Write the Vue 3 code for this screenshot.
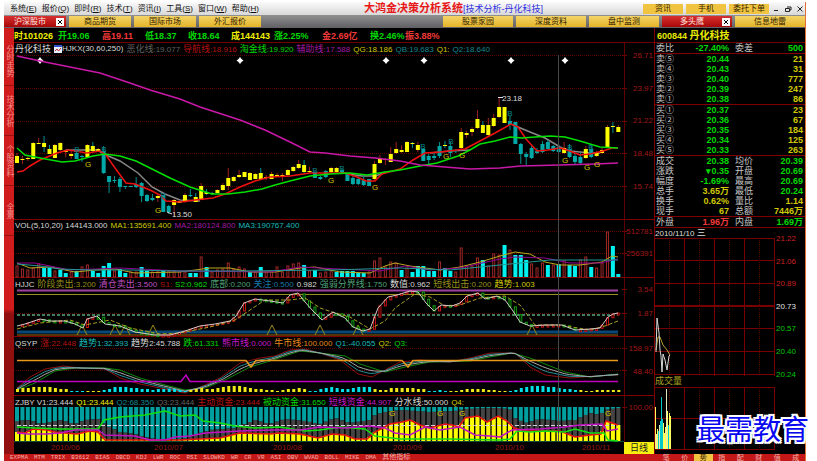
<script setup>
const menus = ['系统(E)', '报价(Q)', '即时(R)', '技术(T)', '资讯(I)', '工具(S)', '窗口(W)', '帮助(H)'].map((m) => ({
  name: m.slice(0, 3), key: m[3], id: m
}))
const leftTabs = [{ t: '沪深股市', on: true }, { t: '商品期货' }, { t: '国际市场' }, { t: '外汇报价' }]
const rightTabs = [{ t: '股票家园' }, { t: '深度资料' }, { t: '盘中监测' }, { t: '多头鹰', on: true }, { t: '信息地雷' }]
const rail = ['分时走势', '技术分析', '个股资料', '全景']

const quote = [
  ['时', '101026', 'y'], ['开', '19.06', 'g'], ['高', '19.11', 'r'], ['低', '18.37', 'g'], ['收', '18.64', 'g'],
  ['成', '144143', 'y'], ['涨', '2.25%', 'g'], ['金', '2.69亿', 'r'], ['换', '2.46%', 'g'], ['振', '3.88%', 'r']
]

const headMain = [
  ['恶化线', ':19.077', 'dim'], ['导航线', ':18.916', 'dr'], ['淘金线', ':19.920', 'g'], ['辅助线', ':17.588', 'm'],
  ['', 'QG:18.186', 'dy'], ['', 'QB:19.683', 't'], ['', 'Q1:', 'dy'], ['', 'Q2:18.640', 't']
]
const headVol = [
  ['', 'VOL(5,10,20) 144143.000', 'w'], ['', 'MA1:135691.400', 'dy'], ['', 'MA2:180124.800', 'm'], ['', 'MA3:190767.400', 'c']
]
const headHjjc = [
  ['', 'HJJC', 'w'], ['阶段卖出', ':3.200', 'o'], ['清仓卖出', ':3.500', 'v'], ['', 'S1:', 'dr'], ['', 'S2:0.962', 'g'],
  ['底部', ':0.200', 's'], ['关注', ':0.500', 'b'], ['', '0.982', 'w'], ['强弱分界线', ':1.750', 's'], ['数值', ':0.962', 'w'],
  ['短线出击', ':0.200', 'o'], ['趋势', ':1.003', 'dy']
]
const headQsyp = [
  ['', 'QSYP', 'w'], ['涨', ':22.448', 'dr'], ['趋势', '1:32.393', 'c'], ['趋势', '2:45.788', 'w'], ['跌', ':61.331', 'g'],
  ['熊市线', ':0.000', 'p'], ['牛市线', ':100.000', 'a'], ['', 'Q1:-40.055', 'c'], ['', 'Q2:', 'dy'], ['', 'Q3:', 'g']
]
const headZjby = [
  ['', 'ZJBY V1:23.444', 'w'], ['', 'Q1:23.444', 'y'], ['', 'Q2:68.350', 't'], ['', 'Q3:23.444', 'dim'],
  ['主动资金', ':23.444', 'dr'], ['被动资金', ':31.650', 'g'], ['短线资金', ':44.907', 'p'], ['分水线', ':50.000', 'w'], ['', 'Q4:', 'dy']
]

/* Sessions are spread evenly between the first and the last x of the plot */
const px = (i) => 17 + (i * 601.3) / 111
const idx = Array.from({ length: 112 }, (_, i) => i)

/* kind, body top, body bottom, wick top, wick bottom */
const candles = `Y156,163,153,163 Y159,160,156,164 Y158,159,155,161 Y143,159,142,159 Y143,144,138,144 M143,147,136,152 M149,154,145,154 Y145,158,144,158 Y143,150,142,151 Y150,152,149,157
Y154,156,150,159 C153,159,150,159 C156,157,155,162 Y145,157,144,157 M146,151,142,152 Y149,151,148,151 C151,173,146,174 C176,182,176,193 C180,181,176,183 C179,187,177,192
C186,187,186,189 C186,187,186,187 C184,187,177,188 C183,196,182,202 C195,201,194,202 C198,200,194,201 Y196,198,194,202 C195,212,195,212 C206,212,205,214 Y200,205,199,217
Y201,203,200,203 Y195,202,193,203 C195,196,189,197 M197,202,193,202 Y186,200,183,200 M192,194,189,195 M193,194,192,195 Y190,193,189,193 Y185,190,183,191 Y178,186,168,190
Y177,181,176,182 Y175,177,170,178 Y172,177,172,177 Y173,180,172,180 Y174,179,173,179 M173,179,168,180 Y177,178,175,180 Y174,179,172,179 Y175,176,173,177 Y175,176,173,181
Y170,175,169,176 Y167,171,166,172 Y164,168,160,169 M165,172,160,173 Y171,172,167,173 C172,178,171,178 C177,179,176,180 C171,177,170,178 Y168,172,167,173 Y168,172,167,173
C170,173,169,173 C174,181,173,181 C178,184,175,185 C179,184,176,185 C180,185,176,186 C179,186,179,186 Y164,179,161,180 Y158,163,155,164 Y159,160,158,165 Y154,162,147,162
Y149,153,142,154 Y150,152,145,153 Y142,152,141,152 M143,144,142,148 Y145,150,142,152 C149,161,148,161 C156,160,154,164 C156,158,153,160 C146,156,142,158 M145,146,141,148
C146,153,142,157 C150,151,149,153 Y132,148,128,149 Y133,135,131,138 Y129,132,127,136 Y119,128,110,129 M125,133,121,133 Y125,135,118,136 Y118,126,114,127 Y107,117,98,118
Y107,123,107,123 C121,125,116,130 C122,144,122,144 C144,154,143,164 C154,157,152,165 C148,158,146,159 C151,153,148,154 C144,152,141,153 C142,149,140,149 C146,151,145,152
C147,152,144,153 Y148,153,142,154 C149,157,144,158 C156,162,153,164 C157,163,153,164 Y149,158,146,159 C149,157,144,158 Y152,156,151,157 Y150,153,148,154 Y127,147,125,148
M126,127,122,133 Y127,132,125,132`.split(/\s+/).map((s, i) => {
  const [t, b, wt, wb] = s.slice(1).split(',').map(Number)
  return { x: px(i), t, h: Math.max(b - t, 1), wt, wb, body: s[0] === 'C' ? '#00a8a8' : '#ffff00', wick: s[0] === 'Y' ? '#a02020' : '#009090' }
})

/* Bar heights; a negative value marks a falling session, drawn solid */
const volumes = [11, 8, 7, 9, 13, -9, -9, 6, -7, -4, 5, -6, 10, 12, -6, -4, -11, -14, 6, -8, -4, 5, 5, -10, -6, 5, 6, -6,
  6, 6, 5, 5, -4, -4, 20, -10, 5, 7, 8, 14, 8, 10, 8, -5, 5, -10, 5, 6, 10, 5, 11, 13, 14, -12, 6, -7,
  4, 5, 6, -5, -6, -6, -6, -4, -4, 5, 16, 19, 10, 15, 14, -7, 9, -5, -11, -11, -6, -6, 15, -9, -6, 5, 29, 11,
  11, 19, -17, 11, 23, 22, -32, 27, -22, -22, -17, 13, 9, 14, -12, 12, -13, 16, -12, -11, 17, 20, -10, 9, 14, 45, -31, -3]

const maRed = '17,172 23,171 30,166 40,160 57,153 68,150 75,151 87,153 100,151 106,155 115,168 126,183 135,184 150,190 160,195 166,201 180,202 195,200 213,198 225,194 240,187 255,181 270,177 290,176 310,173 345,173 357,177 366,181 375,181 382,174 400,169 413,160 425,153 440,152 465,149 480,141 495,133 511,124 518,127 526,139 537,151 548,150 560,148 567,150 580,155 590,154 603,151 612,148 618,148'
const maGrey = ['66,150 97,150 106,155 120,161 138,173 152,187 165,194 180,200 200,201', '345,173 355,175 362,176 376,176 385,172', '430,153 450,151 470,150', '511,124 518,127 530,132 545,138 560,147 570,151 590,153 600,153']
const maGreen = '17,148 25,155 40,158 62,162 75,161 93,156 105,154 120,156 136,161 150,168 170,178 190,187 212,194 228,194 245,192 262,189 275,185 290,181 310,176 330,174 350,173 367,175 385,172 400,170 420,166 437,163 458,156 470,150 480,144 495,141 510,137 522,138 535,137 550,136 565,137 580,141 600,147 618,148'
const maPink = '17,56 40,61 70,67 100,73 130,83 150,90 180,99 200,107 240,120 265,130 290,142 310,152 325,153 350,156 375,158 400,161 420,165 445,167 470,169 500,168 520,166 560,165 595,164 618,163'
const gMarks = [[88, 164], [158, 210], [331, 180], [375, 187], [446, 156], [462, 155], [565, 160], [587, 167], [597, 164]]
const bMarks = [[77, 149], [104, 149], [163, 195], [315, 170], [342, 168], [423, 146], [451, 141], [510, 113], [570, 147], [591, 147]]
const diamonds = [40, 240, 386, 424, 511, 565]

const hjWhite = '17,326 25,324 40,319 50,321 65,321 75,324 83,328 87,319 97,316 105,324 120,326 135,332 155,335 170,335 185,331 200,326 215,324 230,321 236,316 244,303 255,299 270,301 283,303 290,295 298,293 305,302 313,311 322,320 333,312 345,318 353,327 363,331 370,329 378,308 388,297 397,295 410,291 418,292 426,303 434,311 441,305 452,306 460,303 467,296 478,293 485,299 497,296 505,300 513,311 520,322 530,326 545,325 562,325 575,330 590,329 600,328 608,317 613,314 618,313'
const hjYellow = '17,329 40,323 70,320 85,325 110,320 130,328 160,334 180,333 210,327 235,320 250,310 265,300 290,300 305,298 320,308 335,313 350,317 370,329 385,321 395,308 415,294 430,297 445,306 460,305 480,298 505,296 520,305 535,325 560,325 590,330 605,326 618,321'
const peaks = [82, 115, 125, 153, 272, 320, 358, 532]

const parse = (s) => s.split(' ').map((p) => p.split(',').map(Number))
const sampler = (s) => {
  const pts = parse(s)
  return (x) => {
    const k = pts.findIndex((p) => p[0] >= x)
    if (k < 0) return pts[pts.length - 1][1]
    if (k === 0) return pts[0][1]
    const [x0, y0] = pts[k - 1]
    const [x1, y1] = pts[k]
    return y0 + ((y1 - y0) * (x - x0)) / (x1 - x0)
  }
}
const hjAt = sampler(hjWhite)
const hjBars = idx.slice(1).map((i) => {
  const a = hjAt(px(i - 1))
  const b = hjAt(px(i))
  return { x: px(i) - 1, y: Math.min(a, b), h: Math.max(Math.abs(b - a), 2), c: b <= a ? '#c81414' : '#10a010' }
})

const qsRed = '17,388 30,377 45,369 63,366 80,368 105,369 120,378 140,384 160,388 185,393 205,385 220,378 240,363 260,358 275,356 290,350 305,349 320,353 340,360 358,374 372,377 385,370 400,362 420,360 450,362 470,358 490,353 515,353 530,367 545,375 570,378 595,376 618,375'
const qsGreen = '17,390 35,383 55,371 75,368 105,368 120,370 140,378 165,385 185,390 205,388 225,380 250,367 270,361 300,351 320,353 345,356 360,364 385,372 405,367 430,362 470,361 490,357 512,353 530,358 545,364 565,372 590,377 618,374'
const rAt = sampler(qsRed)
const gAt = sampler(qsGreen)
const blend = (k) => idx.map((i) => `${px(i).toFixed(1)},${(rAt(px(i)) * (1 - k) + gAt(px(i)) * k).toFixed(1)}`).join(' ')
const qsCyan = blend(0.33)
const qsWhite = blend(0.66)
const qsBars = [3, 4, 4, 5, 5, 5, 5, 4, 3, 3, -1, -1, -1, 1, 1, 1, -2, -3, -5, -5, -5, -4, -4, -3, -3, -2, -3, -3,
  -3, -3, -2, -1, 2, 3, 4, 3, 3, 4, 5, 6, 6, 6, 5, 4, 3, 3, 2, 2, 1, 2, 3, 3, 4, 3, -1, -1,
  -3, -4, -5, -4, -3, -3, -4, -5, -5, -5, 3, 2, 2, 4, 4, 4, 4, 4, 3, 3, -1, -1, -2, -1, 1, 1, 2, 3,
  3, 3, 3, 2, 2, 1, 1, -1, -2, -4, -5, -6, -6, -6, -5, -5, -4, -3, -3, -2, 2, 1, 1, 2, 2, 2, 2, 2]

const zRed = '17,432 25,433 33,429 47,430 55,432 65,433 77,434 90,431 98,432 105,440 140,440 180,440 220,438 240,433 270,434 280,433 300,434 318,438 332,434 345,435 355,439 367,439 375,432 390,424 402,422 410,420 420,425 430,428 445,424 452,425 459,427 465,418 478,416 487,422 498,416 507,421 514,428 525,431 545,431 560,431 575,437 590,435 601,434 606,421 618,425'
const zTeal = '17,421 30,420 40,424 60,420 75,424 85,420 100,419 105,425 120,432 135,434 145,437 165,441 185,438 210,430 235,428 255,420 270,424 285,419 305,421 320,424 335,418 350,423 370,420 375,415 385,412 400,410 430,412 455,411 465,409 500,408 512,410 515,418 525,423 540,419 560,421 575,420 590,413 600,415 605,410 618,408'
const zGreen = '17,427 35,428 60,429 98,429 104,420 120,417 145,415 165,411 180,416 195,415 203,421 220,423 235,426 255,428 280,427 305,431 320,430 340,427 365,429 375,436 400,439 450,439 500,440 510,439 517,431 530,432 545,431 565,432 575,429 590,433 604,433 608,440 618,441'
const zPink = '17,433 28,434 45,434 60,433 75,430 98,430 105,435 135,436 150,440 165,440 175,437 190,436 205,433 240,431 275,430 300,430 320,427 345,428 370,426 385,428 395,433 410,435 425,427 440,430 460,427 475,435 490,436 500,437 512,430 540,429 565,427 580,425 602,424 607,431 618,429'
const yAt = sampler(zRed)
const tAt = sampler(zTeal)
const zBars = idx.map((i) => ({ x: px(i) - 2, t: tAt(px(i)), y: Math.max(yAt(px(i)), tAt(px(i))) }))
const dates = [['2010/06', 51], ['2010/07', 154], ['2010/08', 273], ['2010/09', 393], ['2010/10', 495], ['2010/11', 582]]

const asks = [['卖⑤', '20.44', '21'], ['卖④', '20.43', '31'], ['卖③', '20.40', '777'], ['卖②', '20.39', '247'], ['卖①', '20.38', '86']]
const bids = [['买①', '20.37', '23'], ['买②', '20.36', '67'], ['买③', '20.35', '184'], ['买④', '20.34', '125'], ['买⑤', '20.33', '263']]
const stats = [
  ['成交', '20.38', 'g', '均价', '20.39', 'g'], ['涨跌', '▾0.35', 'g', '开盘', '20.69', 'g'], ['幅度', '-1.69%', 'g', '最高', '20.69', 'g'],
  ['总手', '3.65万', 'dy', '最低', '20.24', 'g'], ['换手', '0.62%', 'dy', '量比', '1.14', 'dy'], ['现手', '67', 'dy', '总额', '7446万', 'dy']
]
const levels = [['21.22', 240, '#c82020'], ['21.06', 263, '#c82020'], ['20.89', 285, '#c82020'], ['20.73', 308, '#e0e0e0'], ['20.57', 330, '#00c800'], ['20.40', 353, '#00c800'], ['20.24', 376, '#00c800']]
const ticks = [42, 15, 20, 18, 24, 28, 52, 30, 26, 16, 22, 60, 38, 24, 36, 33].map((h, i) => ({
  x: 655 + i, h, c: ['#ffff60', '#e8e8c0', '#00c8c8'][[0, 1, 0, 2, 1, 2, 2, 2, 0, 0, 0, 1, 0, 2, 0, 0][i]]
}))
const indicators = ['EXPMA', 'MTM', 'TRIX', 'B3612', 'BIAS', 'DBCD', 'KDJ', 'LWR', 'ROC', 'RSI', 'SLOWKD', 'WR', 'CR', 'VR', 'ASI', 'OBV', 'WVAD', 'BOLL', 'MIKE', 'DMA', '其他指标']
const sideTabs = ['笔', '价', '势', '指', '配', '财', '值', '成']
</script>

<template>
  <div class="page">
    <div class="app">
      <header class="title-bar">
        <nav class="menus">
          <button v-for="m in menus" :key="m.id" class="menu">{{ m.name }}<u>{{ m.key }}</u>)</button>
        </nav>
        <h1 class="title">大鸿金决策分析系统<span>[技术分析-丹化科技]</span></h1>
        <div class="title-actions">
          <button class="gold">资讯</button>
          <button class="gold">手机</button>
          <button class="gold">委托下单</button>
          <button class="win" aria-label="最小化"><svg viewBox="0 0 8 8"><path d="M2 5.500h4" /></svg></button>
          <button class="win" aria-label="还原"><svg viewBox="0 0 8 8"><path d="M3 2h4v3h-1M1.500 3.500h4v3h-4z" /></svg></button>
          <button class="win" aria-label="关闭"><svg viewBox="0 0 8 8"><path d="M1.500 1.500l5 5M6.500 1.500l-5 5" /></svg></button>
        </div>
      </header>

      <div class="tab-bar">
        <div class="tabs left">
          <button v-for="t in leftTabs" :key="t.t" class="tab" :class="{ on: t.on }">
            <span>{{ t.t }}</span>
            <svg v-if="t.on" class="close" viewBox="0 0 8 8"><path d="M2 2l4 4M6 2l-4 4" /></svg>
          </button>
        </div>
        <div class="tabs right">
          <button v-for="t in rightTabs" :key="t.t" class="tab" :class="{ on: t.on }">
            <span>{{ t.t }}</span>
            <svg v-if="t.on" class="close" viewBox="0 0 8 8"><path d="M2 2l4 4M6 2l-4 4" /></svg>
          </button>
        </div>
      </div>

      <main class="body">
        <aside class="rail">
          <button v-for="r in rail" :key="r">{{ r }}</button>
        </aside>

        <section class="charts">
          <div class="quote">
            <span v-for="q in quote" :key="q[0]" :class="q[2]">{{ q[0] }}{{ q[1] }}</span>
          </div>

          <div class="panels">
            <div class="head">
              <span class="w"><b>丹化科技</b></span>
              <span class="w with-icon">
                <svg class="mark" viewBox="0 0 8 8"><rect width="8" height="8" fill="#e8ecff" /><path d="M0 1h8" stroke="#3050c8" stroke-width="2" /><path d="M1 6l2-2 1.500 2L7 3" stroke="#c03030" fill="none" /></svg>HJKX(30,60,250)
              </span>
              <span v-for="h in headMain" :key="h[0] + h[1]" :class="h[2]"><b>{{ h[0] }}</b>{{ h[1] }}</span>
            </div>
            <svg class="plot" viewBox="14 55 640 164">
              <path class="grid" d="M14 55.500H625M14 88.500H625M14 121.500H625M14 153.500H625M14 186.500H625" />
              <path class="tick" d="M622 55.500h5M622 88.500h5M622 121.500h5M622 153.500h5M622 186.500h5" />
              <g class="axis">
                <text x="653" y="58">26.71</text><text x="653" y="91">23.97</text><text x="653" y="123">21.22</text>
                <text x="653" y="156">18.48</text><text x="653" y="189">15.74</text>
              </g>
              <path v-for="d in diamonds" :key="d" :d="`M${d} 57l1.500 2 2 1.500-2 1.500-1.500 2-1.500-2-2-1.500 2-1.500z`" fill="#fff" />
              <polyline v-for="g in maGrey" :key="g" :points="g" stroke="#888" class="line" />
              <g v-for="(c, i) in candles" :key="i">
                <path :d="`M${c.x} ${c.wt}V${c.wb}`" :stroke="c.wick" />
                <rect :x="c.x - 2" :y="c.t" width="4" :height="c.h" :fill="c.body" />
              </g>
              <polyline :points="maRed" stroke="#f01010" class="line" />
              <polyline :points="maGreen" stroke="#00e000" class="line" />
              <polyline :points="maPink" stroke="#c818a8" class="line" />
              <g class="marks">
                <text v-for="m in gMarks" :key="m[0]" :x="m[0]" :y="m[1] + 3" fill="#d8c800">G</text>
                <text v-for="m in bMarks" :key="m[0]" :x="m[0]" :y="m[1] + 3" fill="#008890">B</text>
              </g>
              <g class="price">
                <path d="M498 97.500h5M167 212l5 2" stroke="#ddd" />
                <text x="502" y="101">23.18</text><text x="172" y="217">13.50</text>
              </g>
            </svg>

            <div class="head ruled">
              <span v-for="h in headVol" :key="h[1]" :class="h[2]">{{ h[1] }}</span>
            </div>
            <svg class="plot" viewBox="14 231 640 46">
              <path class="grid" d="M14 231.500H625M14 253.500H625" />
              <path class="tick" d="M622 231.500h5M622 253.500h5" />
              <g class="axis"><text x="653" y="234">512781</text><text x="653" y="256">256391</text></g>
              <g v-for="(v, i) in volumes" :key="i">
                <rect v-if="v < 0" :x="px(i) - 2" :y="277 + v" width="4" :height="-v" fill="#00f0f0" />
                <rect v-else :x="px(i) - 1" :y="277 - v" width="2" :height="v" fill="none" stroke="#a02828" />
              </g>
              <polyline class="thin" stroke="#b8a820" points="17,263 30,268 50,267 75,272 95,270 115,269 135,273 180,272 210,268 230,268 250,272 275,272 300,268 315,267 340,272 370,273 385,266 395,263 410,266 440,270 460,267 480,262 500,256 515,252 530,254 545,262 560,265 580,265 602,262 612,256 618,257" />
              <polyline class="thin" stroke="#900090" points="17,263 35,263 70,270 120,268 180,271 270,272 300,267 380,271 405,266 430,270 460,268 500,259 515,257 545,258 570,263 600,263 618,259" />
              <polyline class="thin" stroke="#209898" points="17,264 40,266 60,269 90,270 130,270 180,271 240,271 330,270 400,268 450,270 480,267 520,263 550,260 600,260 618,260" />
            </svg>

            <div class="head ruled">
              <span v-for="h in headHjjc" :key="h[0] + h[1]" :class="h[2]"><b>{{ h[0] }}</b>{{ h[1] }}</span>
            </div>
            <svg class="plot" viewBox="14 289 640 47">
              <path class="grid" d="M14 313.500H625" />
              <path class="tick" d="M622 289.500h5M622 313.500h5" />
              <g class="axis"><text x="653" y="292">3.54</text><text x="653" y="316">1.87</text></g>
              <path d="M17 290.500H618" stroke="#a040a0" stroke-width="2" />
              <path d="M17 294.500H618" stroke="#989020" />
              <path d="M17 315H618" stroke="#408060" stroke-width="2" stroke-dasharray="3 2" />
              <path d="M17 332H618" stroke="#084878" stroke-width="3" />
              <path d="M17 335H618" stroke="#a86808" stroke-width="1" />
              <path v-for="p in peaks" :key="p" :d="`M${p - 5} 335l5-10 5 10`" stroke="#988818" fill="none" />
              <rect v-for="(b, i) in hjBars" :key="i" :x="b.x" :y="b.y" width="2" :height="b.h" fill="#000" :stroke="b.c" />
              <polyline :points="hjYellow" class="thin" stroke="#a8a020" stroke-dasharray="4 2" />
              <polyline :points="hjWhite" class="thin" stroke="#d0c8c8" />
            </svg>

            <div class="head ruled">
              <span v-for="h in headQsyp" :key="h[0] + h[1]" :class="h[2]"><b>{{ h[0] }}</b>{{ h[1] }}</span>
            </div>
            <svg class="plot" viewBox="14 348 640 47">
              <path class="grid" d="M14 348.500H625M14 370.500H625" />
              <path class="tick" d="M622 348.500h5M622 370.500h5" />
              <g class="axis"><text x="653" y="351">158.97</text><text x="653" y="374">48.40</text></g>
              <polyline :points="qsRed" class="thin" stroke="#901010" />
              <polyline :points="qsGreen" class="thin" stroke="#108810" />
              <polyline :points="qsCyan" class="thin" stroke="#289098" />
              <polyline :points="qsWhite" class="thin" stroke="#a8a8a8" />
              <polyline points="17,360.500 246,360.500 251,367 256,360.500 402,360.500 408,367 413,360.500 618,360.500" stroke="#e89818" class="line" />
              <polyline points="17,381.500 181,381.500 186,375 190,381.500 618,381.500" stroke="#c000c0" class="line" />
              <rect v-for="(v, i) in qsBars" :key="i" :x="px(i) - 1" :y="392 - Math.abs(v)" width="3" :height="Math.abs(v)" :fill="v < 0 ? '#00e0e8' : '#f0e818'" />
            </svg>

            <div class="head ruled">
              <span v-for="h in headZjby" :key="h[0] + h[1]" :class="h[2]"><b>{{ h[0] }}</b>{{ h[1] }}</span>
            </div>
            <svg class="plot" viewBox="14 407 640 35">
              <path class="tick" d="M622 407.500h5" />
              <g class="axis"><text x="653" y="410">100.00</text></g>
              <g v-for="(b, i) in zBars" :key="i">
                <rect :x="b.x" y="407" width="4" :height="b.t - 407" fill="#00a0a0" />
                <rect :x="b.x" :y="b.t" width="4" :height="442 - b.t" fill="#444" />
                <rect :x="b.x" :y="b.y" width="4" :height="442 - b.y" fill="#ffff00" />
              </g>
              <path d="M17 425.500H618" stroke="#d8d0d8" stroke-dasharray="4 2" />
              <path d="M14 441.500H625" stroke="#105030" />
              <polyline :points="zRed" class="line" stroke="#e81010" />
              <polyline :points="zGreen" class="line" stroke="#10e010" />
              <polyline :points="zPink" class="line" stroke="#c010c0" />
              <g class="marks" fill="#d8c800">
                <text x="392" y="416">G</text><text x="440" y="416">G</text><text x="462" y="416">G</text><text x="608" y="416">G</text>
              </g>
            </svg>
            <span class="axis-line"></span>
            <span class="crosshair"></span>
          </div>

          <div class="dates">
            <svg viewBox="14 442 610 12">
              <g fill="#981818"><text v-for="d in dates" :key="d[0]" :x="d[1]" y="450">{{ d[0] }}</text></g>
            </svg>
            <button class="period">日线</button>
          </div>
        </section>

        <aside class="side">
          <h2>600844 <span>丹化科技</span></h2>
          <table>
            <tbody>
              <tr><th>委比</th><td class="g">-27.40%</td><th>委差</th><td class="g">500</td></tr>
            </tbody>
            <tbody>
              <tr v-for="a in asks" :key="a[0]"><th>{{ a[0] }}</th><td class="g">{{ a[1] }}</td><th></th><td class="dy">{{ a[2] }}</td></tr>
            </tbody>
            <tbody>
              <tr v-for="a in bids" :key="a[0]"><th>{{ a[0] }}</th><td class="g">{{ a[1] }}</td><th></th><td class="dy">{{ a[2] }}</td></tr>
            </tbody>
            <tbody>
              <tr v-for="s in stats" :key="s[0]"><th>{{ s[0] }}</th><td :class="s[2]">{{ s[1] }}</td><th>{{ s[3] }}</th><td :class="s[5]">{{ s[4] }}</td></tr>
            </tbody>
            <tbody>
              <tr><th>外盘</th><td class="r">1.96万</td><th>内盘</th><td class="g">1.69万</td></tr>
            </tbody>
          </table>
          <p class="day">2010/11/10 <b>三</b></p>
          <svg class="plot" viewBox="655 240 150 138">
            <path class="intra" d="M655 240.500H774M655 262.500H774M655 285.500H774M655 330.500H774M655 353.500H774M655 376.500H774M684.500 240V378M714.500 240V378M744.500 240V378M774.500 240V378" />
            <path class="intra" stroke-width="2" d="M655 308H774" />
            <path class="grid" d="M669.500 240V376M699.500 240V376M729.500 240V376M759.500 240V376" />
            <text v-for="l in levels" :key="l[0]" x="776" :y="l[1] + 3" :fill="l[2]">{{ l[0] }}</text>
            <polyline class="thin" stroke="#b8a030" points="656,352 658,339 660,339 663,347 667,352 670,357" />
            <polyline class="thin" stroke="#d8d8d8" points="656,354 657,320 659,335 660,352 661,358 662,374 663,356 665,362 667,372 669,358 670,357" />
          </svg>
          <p class="vol-title">成交量</p>
          <svg class="plot" viewBox="655 389 150 64">
            <path class="intra" d="M655 389.500H774M655 420.500H774M655 451.500H774M684.500 389V452M714.500 389V452M744.500 389V452M774.500 389V452" />
            <path class="grid" d="M669.500 389V452M699.500 389V452M729.500 389V452M759.500 389V452" />
            <rect v-for="t in ticks" :key="t.x" :x="t.x" :y="451 - t.h" width="1" :height="t.h" :fill="t.c" />
          </svg>
        </aside>
      </main>

      <footer class="foot">
        <div class="inds"><button v-for="n in indicators" :key="n">{{ n }}</button></div>
        <div class="side-tabs"><button v-for="s in sideTabs" :key="s" :class="{ on: s === '势' }">{{ s }}</button></div>
      </footer>
      <p class="brand">最需教育</p>
    </div>
  </div>
</template>

<style>
body {
  margin: 0;
  background: #fff;
}
</style>

<style scoped>
.page {
  padding: 2px 11px 0 4px;
  font-family: "Liberation Sans", "Noto Sans CJK SC", sans-serif;
  font-size: 8px;
  color: #ddd;
}
.app {
  position: relative;
  border-right: 1px solid #e07038;
}
button {
  margin: 0;
  padding: 0;
  border: 0;
  background: none;
  font: inherit;
  color: inherit;
  white-space: nowrap;
}
svg {
  display: block;
}
h1, h2, p {
  margin: 0;
  font-weight: normal;
}
.title-bar {
  display: flex;
  align-items: center;
  height: 13px;
  background: linear-gradient(#fafafa, #d8d8d8);
  color: #111;
}
.menus {
  display: flex;
  gap: 5px;
  width: 360px;
  padding-left: 6px;
  box-sizing: border-box;
  line-height: 12px;
}
.title {
  flex: 1;
  font-size: 11px;
  line-height: 13px;
  color: #e81818;
  font-weight: bold;
  white-space: nowrap;
}
.title span {
  font-size: 9px;
  font-weight: normal;
  color: #3030e0;
}
.title-actions {
  display: flex;
  gap: 3px;
  align-items: center;
}
.gold {
  width: 40px;
  height: 10px;
  line-height: 10px;
  background: #f0c440;
  color: #332200;
}
.win {
  width: 9px;
}
.win svg {
  width: 8px;
  height: 8px;
  fill: none;
  stroke: #222;
}
.tab-bar {
  display: flex;
  justify-content: space-between;
  height: 13px;
  background: linear-gradient(#909090, #606064);
}
.tabs {
  display: flex;
  gap: 3px;
}
.tab {
  display: flex;
  align-items: center;
  justify-content: center;
  width: 62px;
  height: 11px;
  margin-top: 1px;
  line-height: 11px;
  background: linear-gradient(#f4d468, #e4b428);
  color: #302000;
}
.right .tab {
  width: 70px;
}
.tab span {
  flex: 1;
  text-align: center;
}
.tab.on {
  background: linear-gradient(#d83030, #a80808);
  color: #ffe8e0;
}
.close {
  width: 8px;
  height: 8px;
  margin-right: 2px;
  background: #fff;
  stroke: #000;
}
.body {
  display: flex;
  background: #000;
}
.rail {
  display: flex;
  flex-direction: column;
  width: 10px;
  padding-top: 8px;
  box-sizing: border-box;
  background: linear-gradient(#d01c1c 0 66%, #901010 67%);
}
.rail button {
  height: 50px;
  writing-mode: vertical-rl;
  line-height: 10px;
  color: #f09090;
  border-bottom: 1px solid #981010;
}
.charts {
  flex: 1;
  min-width: 0;
}
.quote {
  display: grid;
  grid-template-columns: 44px 44px 43px 43px 43px 43px 48px 48px 35px 1fr;
  height: 15px;
  line-height: 16px;
  font-size: 9px;
  font-weight: bold;
  white-space: nowrap;
  box-sizing: border-box;
  border-bottom: 1px solid #700000;
}
.panels {
  position: relative;
}
.head {
  display: flex;
  gap: 3px;
  height: 12px;
  padding-left: 1px;
  line-height: 12px;
  white-space: nowrap;
  box-sizing: border-box;
}
.ruled {
  border-top: 1px solid #800000;
}
.head b {
  font-size: 9px;
  font-weight: normal;
}
.with-icon {
  display: flex;
  align-items: center;
}
.mark {
  width: 8px;
  height: 8px;
}
.plot {
  width: 100%;
  height: auto;
  overflow: visible;
}
.line, .thin {
  fill: none;
  stroke-width: 1.500;
}
.thin {
  stroke-width: 1;
}
.grid {
  stroke: #580000;
  stroke-dasharray: 1 1;
}
.tick, .intra {
  stroke: #780000;
}
.axis {
  fill: #a01818;
  text-anchor: end;
}
.marks {
  text-anchor: middle;
}
.price {
  fill: #ddd;
}
.axis-line {
  position: absolute;
  top: 0;
  bottom: 0;
  right: 29px;
  width: 1px;
  background: #600000;
}
.crosshair {
  position: absolute;
  top: 12px;
  bottom: 0;
  left: 85%;
  width: 1px;
  background: #484848;
}
.dates {
  display: flex;
  height: 12px;
}
.dates svg {
  flex: 1;
  min-width: 0;
}
.period {
  width: 30px;
  background: #f8f010;
  color: #222;
  font-size: 9px;
  line-height: 12px;
}
.side {
  width: 151px;
  box-sizing: border-box;
  border-left: 1px solid #800000;
}
h2 {
  height: 15px;
  padding-left: 2px;
  box-sizing: border-box;
  border-bottom: 1px solid #700000;
  font-size: 9px;
  line-height: 15px;
  font-weight: bold;
  color: #e8e800;
}
h2 span {
  font-size: 10px;
}
table {
  width: 100%;
  table-layout: fixed;
  border-spacing: 0;
  font-size: 9px;
  line-height: 10px;
}
th, td {
  height: 10px;
  padding: 0;
  line-height: 10px;
  white-space: nowrap;
}
th {
  width: 20px;
  padding-left: 1px;
  text-align: left;
  font-weight: normal;
  color: #c8c8c8;
}
td {
  padding-right: 5px;
  text-align: right;
  font-weight: bold;
}
td:nth-child(2) {
  width: 53px;
}
td:last-child {
  padding-right: 2px;
}
tbody tr:last-child > * {
  border-bottom: 1px solid #800000;
}
.day {
  height: 10px;
  line-height: 10px;
}
.day b {
  font-size: 9px;
  font-weight: normal;
}
.vol-title {
  height: 11px;
  line-height: 10px;
  font-size: 9px;
  color: #a8a020;
}
.foot {
  display: flex;
  height: 7px;
  background: #c41818;
  font-size: 6px;
  line-height: 7px;
  color: #f0b0a8;
}
.inds {
  display: flex;
  flex: 1;
  gap: 6px;
  padding-left: 6px;
  font-family: "Liberation Mono", "Noto Sans CJK SC", monospace;
}
.foot button {
  height: 7px;
}
.inds button:last-child, .side-tabs {
  font-size: 7px;
}
.side-tabs {
  display: flex;
  width: 148px;
}
.side-tabs button {
  flex: 1;
}
.side-tabs .on {
  background: #f0c440;
  color: #302000;
}
.brand {
  position: absolute;
  right: -4px;
  bottom: 12px;
  font-size: 28px;
  line-height: 36px;
  font-weight: 400;
  color: #0808f0;
  text-shadow: 2px 0 #fff, -2px 0 #fff, 0 2px #fff, 0 -2px #fff, 2px 2px #fff, -2px -2px #fff, 2px -2px #fff, -2px 2px #fff;
}
.w { color: #d8d8d8; }
.y { color: #f0f000; }
.dy { color: #d0c800; }
.g { color: #00d800; }
.r { color: #f03838; }
.dr { color: #b81010; }
.dim { color: #606060; }
.m { color: #a018a0; }
.p { color: #c818c8; }
.v { color: #c050c0; }
.t { color: #108890; }
.c { color: #18b8b8; }
.o { color: #989018; }
.s { color: #50a078; }
.b { color: #1878a8; }
.a { color: #e88818; }
</style>
